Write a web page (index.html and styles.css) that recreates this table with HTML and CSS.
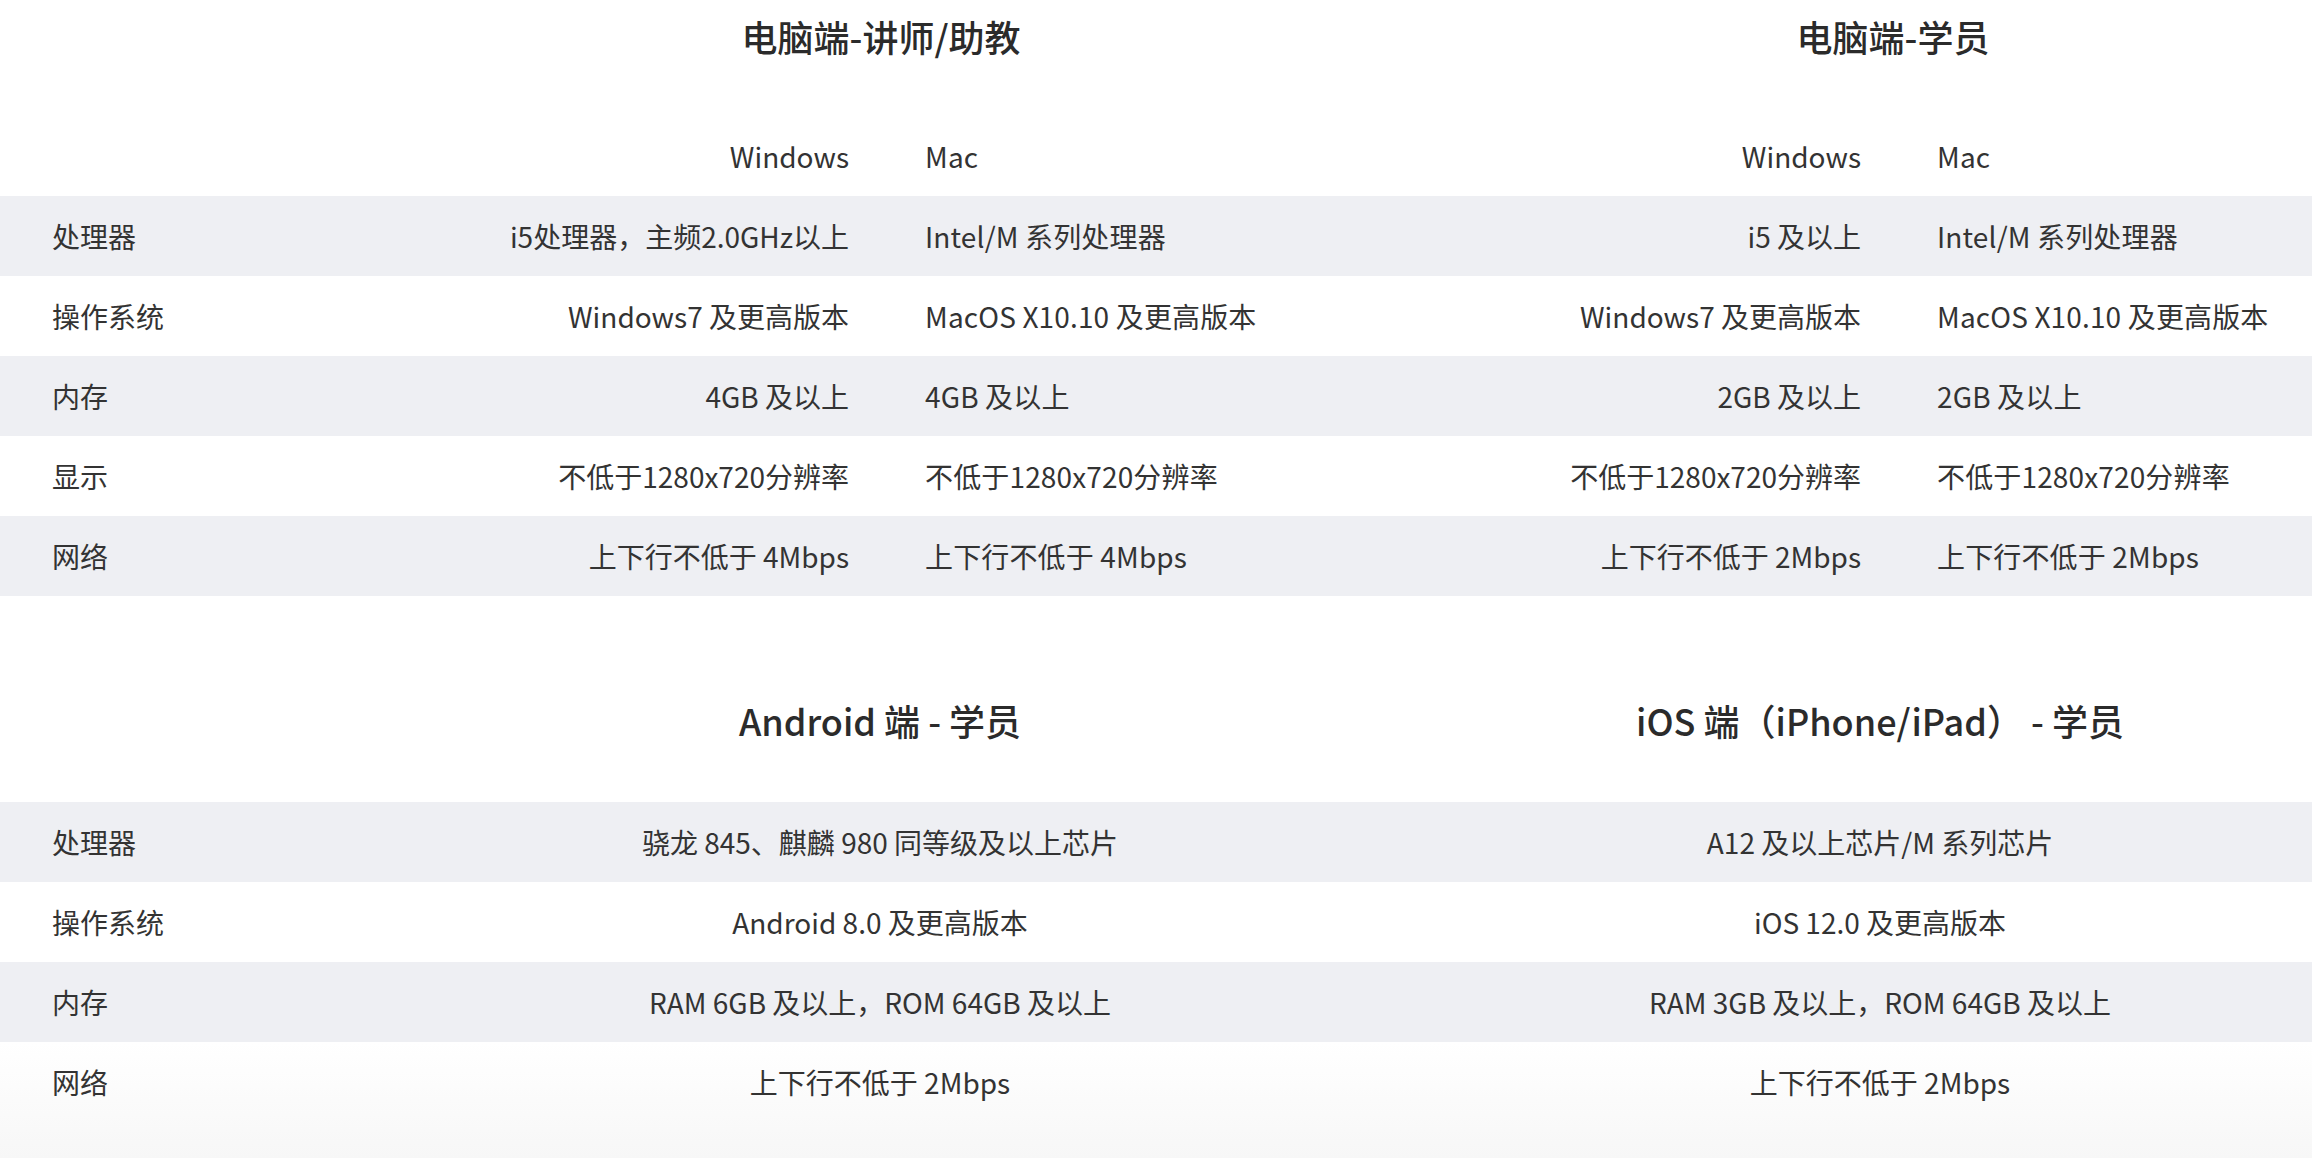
FILE: index.html
```html
<!DOCTYPE html>
<html lang="zh-CN">
<head>
<meta charset="utf-8">
<title>设备配置要求</title>
<link rel="stylesheet" href="styles.css">
</head>
<body>
<div class="page">
  <table class="spec spec-pc">
    <colgroup>
      <col class="c-label">
      <col class="c-win">
      <col class="c-mac">
      <col class="c-win">
      <col class="c-mac">
    </colgroup>
    <thead>
      <tr class="title-row">
        <th></th>
        <th colspan="2" class="title">电脑端-讲师/助教</th>
        <th colspan="2" class="title">电脑端-学员</th>
      </tr>
      <tr class="head-row">
        <th></th>
        <th class="win">Windows</th>
        <th class="mac">Mac</th>
        <th class="win">Windows</th>
        <th class="mac">Mac</th>
      </tr>
    </thead>
    <tbody>
      <tr class="alt">
        <td class="label">处理器</td>
        <td class="win">i5处理器，主频2.0GHz以上</td>
        <td class="mac">Intel/M 系列处理器</td>
        <td class="win">i5 及以上</td>
        <td class="mac">Intel/M 系列处理器</td>
      </tr>
      <tr>
        <td class="label">操作系统</td>
        <td class="win">Windows7 及更高版本</td>
        <td class="mac">MacOS X10.10 及更高版本</td>
        <td class="win">Windows7 及更高版本</td>
        <td class="mac">MacOS X10.10 及更高版本</td>
      </tr>
      <tr class="alt">
        <td class="label">内存</td>
        <td class="win">4GB 及以上</td>
        <td class="mac">4GB 及以上</td>
        <td class="win">2GB 及以上</td>
        <td class="mac">2GB 及以上</td>
      </tr>
      <tr>
        <td class="label">显示</td>
        <td class="win">不低于1280x720分辨率</td>
        <td class="mac">不低于1280x720分辨率</td>
        <td class="win">不低于1280x720分辨率</td>
        <td class="mac">不低于1280x720分辨率</td>
      </tr>
      <tr class="alt">
        <td class="label">网络</td>
        <td class="win">上下行不低于 4Mbps</td>
        <td class="mac">上下行不低于 4Mbps</td>
        <td class="win">上下行不低于 2Mbps</td>
        <td class="mac">上下行不低于 2Mbps</td>
      </tr>
    </tbody>
  </table>

  <table class="spec spec-mobile">
    <colgroup>
      <col class="c-label-m">
      <col class="c-dev">
      <col class="c-dev">
    </colgroup>
    <thead>
      <tr class="title-row">
        <th></th>
        <th class="title">Android 端 - 学员</th>
        <th class="title">iOS 端（iPhone/iPad） - 学员</th>
      </tr>
    </thead>
    <tbody>
      <tr class="alt">
        <td class="label">处理器</td>
        <td class="center">骁龙 845、麒麟 980 同等级及以上芯片</td>
        <td class="center">A12 及以上芯片/M 系列芯片</td>
      </tr>
      <tr>
        <td class="label">操作系统</td>
        <td class="center">Android 8.0 及更高版本</td>
        <td class="center">iOS 12.0 及更高版本</td>
      </tr>
      <tr class="alt">
        <td class="label">内存</td>
        <td class="center">RAM 6GB 及以上，ROM 64GB 及以上</td>
        <td class="center">RAM 3GB 及以上，ROM 64GB 及以上</td>
      </tr>
      <tr>
        <td class="label">网络</td>
        <td class="center">上下行不低于 2Mbps</td>
        <td class="center">上下行不低于 2Mbps</td>
      </tr>
    </tbody>
  </table>
</div>
</body>
</html>
```
FILE: styles.css
```css
html,
body {
  margin: 0;
  padding: 0;
}

body {
  font-family: "Noto Sans CJK SC", "Noto Sans", sans-serif;
  color: #333333;
  background: #ffffff;
  overflow: hidden;
}

.page {
  width: 2312px;
  height: 1158px;
  overflow: hidden;
  background: linear-gradient(to bottom, #ffffff 0%, #ffffff 90%, #f7f7f7 100%);
}

.spec {
  border-collapse: collapse;
  border-spacing: 0;
  table-layout: fixed;
  font-size: 28px;
}

.spec-pc {
  width: 2399px;
}

.spec-mobile {
  width: 2380px;
}

.c-label {
  width: 375px;
}

.c-win {
  width: 511px;
}

.c-mac {
  width: 501px;
}

.c-label-m {
  width: 380px;
}

.c-dev {
  width: 1000px;
}

.spec th,
.spec td {
  padding: 0;
  height: 80px;
  line-height: 40px;
  vertical-align: middle;
  font-weight: 400;
  white-space: nowrap;
}

.spec .title-row th {
  height: auto;
  vertical-align: top;
}

.spec .title {
  font-size: 36px;
  font-weight: 500;
  line-height: 72px;
  text-align: center;
  color: #2b2b2b;
}

.spec-pc .title-row th {
  padding: 0 0 44px;
}

.spec-mobile .title-row th {
  padding: 88px 0 46px;
}

.alt {
  background: #eeeff3;
}

.label {
  text-align: left;
  padding-left: 52px !important;
}

.win {
  text-align: right;
  padding-right: 37px !important;
}

.mac {
  text-align: left;
  padding-left: 39px !important;
  letter-spacing: 0.15px;
}

.center {
  text-align: center;
}
```
